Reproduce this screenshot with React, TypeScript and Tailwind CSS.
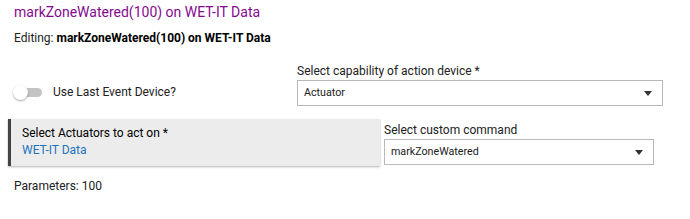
import React from 'react';

const Caret = () => (
  <svg width="8" height="5" viewBox="0 0 8 5" className="shrink-0">
    <path d="M0 0 L8 0 L4 5 Z" fill="#333" />
  </svg>
);

const SelectBox: React.FC<{ label: string; value: string; width: string }> = ({ label, value, width }) => (
  <div className={`${width} flex flex-col`}>
    <div className="text-[12px] leading-[16px] text-[#212121]">{label}</div>
    <div className="mt-[1px] h-[26px] border border-[#b8b8b8] flex items-center justify-between pl-[6px] pr-[10px] bg-white">
      <span className="text-[10.7px] text-[#212121]">{value}</span>
      <Caret />
    </div>
  </div>
);

export default function App() {
  return (
    <div className="w-[690px] h-[219px] bg-white pt-[3px] pl-[8px]" style={{ fontFamily: 'Roboto, "Liberation Sans", sans-serif' }}>
      <div className="pl-[6px] text-[14px] leading-[18px] text-[#850a8f]">markZoneWatered(100) on WET-IT Data</div>
      <div className="pl-[6px] mt-[9px] text-[12px] leading-[16px] text-[#212121]">
        Editing: <span className="font-bold text-black">markZoneWatered(100) on WET-IT Data</span>
      </div>

      <div className="flex mt-[17px]">
        <div className="w-[289px] flex items-center pt-[21px] self-start pl-[5px]">
          <div className="relative w-[29px] h-[15px] flex items-center">
            <div className="ml-[7px] w-[22px] h-[9px] rounded-full bg-[#c4c4c4]" />
            <div className="absolute left-0 top-0 w-[15px] h-[15px] rounded-full bg-white shadow-[0_1px_2px_rgba(0,0,0,0.35)]" />
          </div>
          <span className="ml-[11px] text-[12px] leading-[16px] text-[#212121]">Use Last Event Device?</span>
        </div>
        <SelectBox label="Select capability of action device *" value="Actuator" width="w-[366px]" />
      </div>

      <div className="flex mt-[13px] items-start">
        <div className="w-[372px] h-[47px] bg-[#ececec] border-l-[3px] border-[#444] shadow-[0_1px_2px_rgba(0,0,0,0.3)] pl-[11px] pt-[6px]">
          <div className="text-[12px] leading-[17px] text-black">Select Actuators to act on *</div>
          <div className="text-[12px] leading-[17px] text-[#1e73be]">WET-IT Data</div>
        </div>
        <div className="ml-[4px] pt-[3px]">
          <SelectBox label="Select custom command" value="markZoneWatered" width="w-[270px]" />
        </div>
      </div>

      <div className="pl-[6px] mt-[12px] text-[12px] leading-[16px] text-[#212121]">Parameters: 100</div>
    </div>
  );
}
